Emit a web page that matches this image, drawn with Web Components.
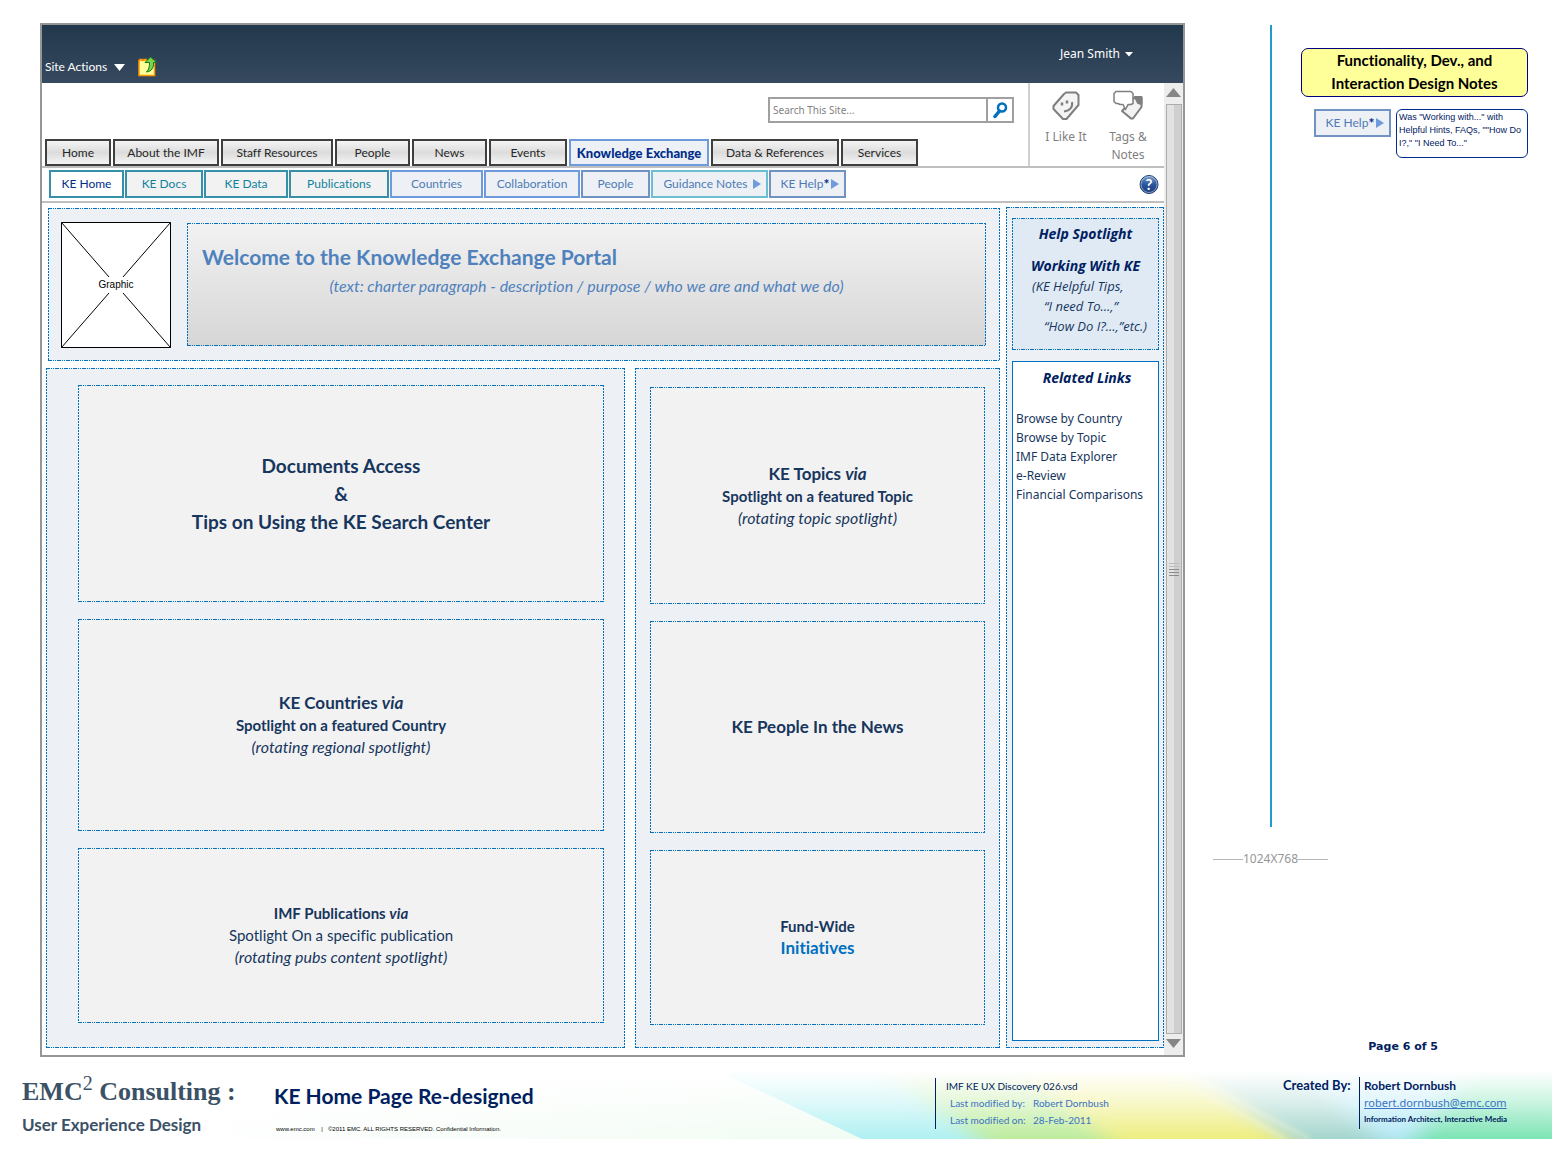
<!DOCTYPE html>
<html lang="en">
<head>
<meta charset="utf-8">
<title>KE Home Page Re-designed</title>
<style>
  body {
    margin: 0;
    min-height: 100vh;
    display: flex;
    flex-direction: column;
    background: #fff;
    color: #17365d;
    font: 16px/20px Lato, "Open Sans", sans-serif;
    font-variant-ligatures: none;
    --blue: #0070c0;
    --navy: #002060;
    --panel: #edf1f6;
  }
  .sheet {
    flex: 1;
    display: grid;
    grid-template-columns: minmax(0, 1fr) 374px;
    padding: 23px 0 0 40px;
  }
  ke-window { min-width: 0; }
  p { margin: 0; }
  .lead { font-size: 19px; line-height: 28px; }
  .head { font-size: 17px; line-height: 22px; }
  .sub { font-size: 15px; line-height: 22px; }
  .note { font-size: 16px; line-height: 22px; }
  .blue { color: var(--blue); }
</style>
</head>
<body>
<div class="sheet">
  <ke-window>
    <ke-topbar slot="top"></ke-topbar>
    <ke-header slot="head">
      <ke-search slot="search"></ke-search>
      <ke-tab slot="tabs" width="66">Home</ke-tab>
      <ke-tab slot="tabs" width="106">About the IMF</ke-tab>
      <ke-tab slot="tabs" width="112">Staff Resources</ke-tab>
      <ke-tab slot="tabs" width="75">People</ke-tab>
      <ke-tab slot="tabs" width="75">News</ke-tab>
      <ke-tab slot="tabs" width="78">Events</ke-tab>
      <ke-tab slot="tabs" width="140" kind="active">Knowledge Exchange</ke-tab>
      <ke-tab slot="tabs" width="128">Data &amp; References</ke-tab>
      <ke-tab slot="tabs" width="77">Services</ke-tab>
    </ke-header>
    <ke-subnav slot="head">
      <ke-tab width="75" kind="current">KE Home</ke-tab>
      <ke-tab width="78" kind="teal">KE Docs</ke-tab>
      <ke-tab width="84" kind="teal">KE Data</ke-tab>
      <ke-tab width="100" kind="teal">Publications</ke-tab>
      <ke-tab width="93" kind="sky">Countries</ke-tab>
      <ke-tab width="96" kind="sky">Collaboration</ke-tab>
      <ke-tab width="69" kind="steel">People</ke-tab>
      <ke-tab width="117" kind="aqua" arrow>Guidance Notes</ke-tab>
      <ke-tab width="77" kind="steel" arrow starred>KE Help</ke-tab>
    </ke-subnav>

    <ke-hero>
      <span slot="title">Welcome to the Knowledge Exchange Portal</span>
      <span slot="text">(text: charter paragraph - description / purpose / who we are and what we do)</span>
    </ke-hero>

    <ke-columns>
      <ke-panel slot="wide" kind="wide">
        <ke-card>
          <p class="lead"><b>Documents Access</b></p>
          <p class="lead"><b>&amp;</b></p>
          <p class="lead"><b>Tips on Using the KE Search Center</b></p>
        </ke-card>
        <ke-card>
          <p class="head"><b>KE Countries <i>via</i></b></p>
          <p class="sub"><b>Spotlight on a featured Country</b></p>
          <p class="note"><i>(rotating regional spotlight)</i></p>
        </ke-card>
        <ke-card>
          <p class="sub"><b>IMF Publications <i>via</i></b></p>
          <p class="sub">Spotlight On a specific publication</p>
          <p class="note"><i>(rotating pubs content spotlight)</i></p>
        </ke-card>
      </ke-panel>
      <ke-panel slot="slim" kind="slim">
        <ke-card>
          <p class="head"><b>KE Topics <i>via</i></b></p>
          <p class="sub"><b>Spotlight on a featured Topic</b></p>
          <p class="note"><i>(rotating topic spotlight)</i></p>
        </ke-card>
        <ke-card>
          <p class="head"><b>KE People In the News</b></p>
        </ke-card>
        <ke-card>
          <p class="sub"><b>Fund-Wide</b></p>
          <p class="head blue"><b>Initiatives</b></p>
        </ke-card>
      </ke-panel>
    </ke-columns>

    <ke-sidebar slot="side"></ke-sidebar>
  </ke-window>
  <ke-notes></ke-notes>
</div>
<ke-footer></ke-footer>

<script>
// dash-dot-dot outline drawn along the four edges of a box
const outline = `
  background-image:
    repeating-linear-gradient(90deg, var(--blue) 0 4px, transparent 4px 5px, var(--blue) 5px 6px, transparent 6px 7px, var(--blue) 7px 8px, transparent 8px 9px),
    repeating-linear-gradient(90deg, var(--blue) 0 4px, transparent 4px 5px, var(--blue) 5px 6px, transparent 6px 7px, var(--blue) 7px 8px, transparent 8px 9px),
    repeating-linear-gradient(180deg, var(--blue) 0 2px, transparent 2px 3px),
    repeating-linear-gradient(180deg, var(--blue) 0 2px, transparent 2px 3px),
    linear-gradient(var(--from, transparent), var(--to, transparent));
  background-size: 100% 1px, 100% 1px, 1px 100%, 1px 100%, 100% 100%;
  background-position: top, bottom, left, right, center;
  background-repeat: no-repeat;
`;

const reset = `
  *, *::before, *::after { box-sizing: border-box; }
  button { margin: 0; padding: 0; border: 0; background: none; font: inherit; color: inherit; }
  a { color: inherit; text-decoration: none; }
`;

function define(name, markup) {
  customElements.define(name, class extends HTMLElement {
    connectedCallback() {
      if (this.shadowRoot) return;
      const root = this.attachShadow({ mode: "open" });
      root.innerHTML = typeof markup === "function" ? markup(this) : markup;
    }
  });
}

define("ke-window", `
  <style>${reset}
    :host { display: flex; flex-direction: column; box-sizing: border-box; border: 2px solid #969696; }
    .view { flex: 1; display: grid; grid-template-columns: minmax(0, 1fr) 19px; }
    .page { display: flex; flex-direction: column; }
    .body { flex: 1; display: grid; grid-template-columns: minmax(0, 1fr) 158px; gap: 6px; padding: 5px 0 7px 4px; }
    .main { display: flex; flex-direction: column; gap: 7px; }
  </style>
  <slot name="top"></slot>
  <div class="view">
    <div class="page">
      <slot name="head"></slot>
      <div class="body">
        <div class="main"><slot></slot></div>
        <slot name="side"></slot>
      </div>
    </div>
    <ke-scrollbar></ke-scrollbar>
  </div>
`);

define("ke-topbar", `
  <style>${reset}
    :host { display: flex; justify-content: space-between; height: 58px; color: #fff;
      background: linear-gradient(#22384c, #36495f); font-size: 12px; line-height: 18px; }
    .left { display: flex; align-items: center; gap: 13px; padding: 26px 0 0 3px; }
    button { display: flex; align-items: center; gap: 7px; }
    .right { padding: 20px 50px 0 0; align-self: flex-start; font: 12px/18px "Noto Sans", sans-serif; }
    .right button { gap: 5px; }
  </style>
  <div class="left">
    <button>Site Actions <svg width="11" height="7"><path d="M0 0h11L5.500 7z" fill="#fff"/></svg></button>
    <svg width="20" height="22" viewBox="0 0 20 22">
      <path d="M1 4.500h1v-1h2v1h2v-1h2v1h8.500v15H1z" fill="#ffff99" stroke="#ff9900" stroke-width="1.500"/>
      <path d="M12.500 1 18.500 6.500h-3c.5 5-2 9-7 9.500 2.500-2.500 3-5 3-9.500H7z" fill="#7fd04f" stroke="#0a7d14"/>
    </svg>
  </div>
  <div class="right"><button>Jean Smith <svg width="8" height="6"><path d="M0 1h8L4 5.500z" fill="#fff"/></svg></button></div>
`);

define("ke-header", `
  <style>${reset}
    :host { display: grid; grid-template-columns: minmax(0, 1fr) 136px; border-bottom: 2px solid #bfbfbf; --tab-height: 27px; }
    .left { display: flex; flex-direction: column; padding: 14px 14px 0 3px; }
    .tabs { display: flex; gap: 2px; margin-top: 16px; }
    .tools { display: flex; gap: 14px; padding: 7px 12px 0 12px; border-left: 2px solid #d0d0d0; color: #7f7f7f; }
    button { display: flex; flex-direction: column; align-items: center; gap: 7px; width: 48px; font: 12px/18px "Noto Sans", sans-serif; }
  </style>
  <div class="left">
    <slot name="search"></slot>
    <div class="tabs"><slot name="tabs"></slot></div>
  </div>
  <div class="tools">
    <button>
      <svg width="30" height="31" viewBox="0 0 30 31" stroke="#7f7f7f" stroke-width="2" stroke-linejoin="round">
        <path d="M2.500 16 13 4 15 2.500h10L27.500 5v10L15.500 29H12L2.500 19z" fill="#f4f4f4"/>
        <path d="M21 12c1 5-2 9-8 9.500" fill="none"/>
        <path d="M11 12.500v3M16 10.500v3" stroke-width="2.500"/>
      </svg>
      I Like It
    </button>
    <button>
      <svg width="30" height="31" viewBox="0 0 30 31" stroke="#7f7f7f" stroke-width="2" stroke-linejoin="round">
        <path d="M9 21 21 8h7.500v9L20 28.500h-2z" fill="#f2f2f2"/>
        <path d="M22 7h6.500v7l-3.500-1z" fill="#7f7f7f"/>
        <path d="M3 1.500h15l2 2v10l-2 1h-3l-2.500 5-2.500-5H7l-2-1H3l-2-2v-8z" fill="#fff" stroke-width="1.500"/>
      </svg>
      Tags &amp; Notes
    </button>
  </div>
`);

define("ke-search", `
  <style>${reset}
    :host { display: flex; align-self: flex-end; width: 246px; height: 26px; border: 2px solid #a0a0a0; box-sizing: border-box; }
    input { flex: 1; min-width: 0; padding: 0 3px; border: 0; outline: 0; font: 10px/18px "Noto Sans", sans-serif; color: #7f7f7f; }
    input::placeholder { color: #7f7f7f; opacity: 1; }
    button { width: 26px; display: grid; place-items: center; border-left: 2px solid #a0a0a0; }
  </style>
  <input type="search" placeholder="Search This Site..." aria-label="Search This Site">
  <button aria-label="Search">
    <svg width="15" height="17" viewBox="0 0 15 17" fill="none" stroke="#0070c0"><circle cx="9" cy="5.500" r="4" stroke-width="2.500"/><path d="M6.500 9 2 14.500" stroke-width="3.500" stroke-linecap="round"/></svg>
  </button>
`);

define("ke-tab", host => `
  <style>${reset}
    :host { display: block; width: ${host.getAttribute("width")}px; font-size: 12px; line-height: 20px;
      --line: #3f3f3f; --ink: #262626; --fill: linear-gradient(#f4f4f4, #dcdcdc 50%, #f4f4f4); }
    :host([kind]) { --fill: var(--panel); }
    :host([kind="active"]) { --line: #6f9bdc; --ink: #002d8a; font-size: 13px; font-weight: 900; }
    :host([kind="current"]) { --line: #3590a8; --ink: #002d8a; --fill: #fff; }
    :host([kind="teal"]) { --line: #3590a8; --ink: #0f829f; --fill: #f2f2f2; }
    :host([kind="sky"]) { --line: #6f9bdc; --ink: #4f7ab5; }
    :host([kind="steel"]) { --line: #7193c4; --ink: #4f7ab5; }
    :host([kind="aqua"]) { --line: #6cbfcf; --ink: #4f7ab5; }
    a { display: flex; align-items: center; justify-content: center; height: var(--tab-height, 28px); white-space: nowrap;
      border: 2px solid var(--line); background: var(--fill); color: var(--ink); }
    svg { margin-left: 5px; }
    b { color: #002d8a; font-size: 14px; }
    b + svg { margin-left: 2px; }
    :host([arrow]) a { padding-left: 5px; }
  </style>
  <a href="#"><slot></slot>${host.hasAttribute("starred") ? "<b>*</b>" : ""}${host.hasAttribute("arrow")
    ? `<svg width="8" height="10"><path d="M0 0 8 5 0 10z" fill="#6f9bdc"/></svg>` : ""}</a>
`);

define("ke-subnav", `
  <style>${reset}
    :host { display: flex; justify-content: space-between; align-items: flex-start; padding: 2px 5px 3px 7px; border-bottom: 2px solid #bfbfbf; }
    nav { display: flex; gap: 1px; }
    button { margin-top: 4px; display: flex; }
    svg { font: bold 15px Lato, sans-serif; }
  </style>
  <nav><slot></slot></nav>
  <button aria-label="Help">
    <svg width="20" height="21" viewBox="0 0 20 21">
      <defs><linearGradient id="g" x2="0" y2="1"><stop stop-color="#7fa3d4"/><stop offset=".5" stop-color="#2a569c"/><stop offset="1" stop-color="#173a77"/></linearGradient></defs>
      <circle cx="10" cy="10.500" r="9" fill="url(#g)" stroke="#1d3c70"/>
      <circle cx="10" cy="10.500" r="8" fill="none" stroke="#b4c6e0" stroke-width=".7"/>
      <text x="10" y="16" text-anchor="middle" fill="#fff">?</text>
    </svg>
  </button>
`);

define("ke-hero", `
  <style>${reset}
    :host { display: grid; grid-template-columns: 110px minmax(0, 1fr); gap: 16px; box-sizing: border-box;
      height: 153px; margin-left: 2px; padding: 14px 14px 13px 13px; --from: var(--panel); --to: var(--panel); ${outline} }
    .graphic { display: block; width: 110px; height: 126px; }
    .graphic text { font: 10px "Liberation Sans", sans-serif; }
    .banner { padding: 18px 15px; margin: 1px 0 2px; color: #4f81bd; --from: #f2f2f2; --to: #d6d6d6; ${outline} }
    h1 { margin: 0; font-size: 21px; line-height: 32px; }
    p { margin: 0; font-size: 16px; line-height: 26px; font-style: italic; text-align: center; }
  </style>
  <svg class="graphic" viewBox="0 0 110 126">
    <path d="M.5.5h109v125H.5z" fill="#fff" stroke="#000"/>
    <path d="M.5.500 48 55M109.500.500 62 55M.5 125.500 48 71M109.500 125.500 62 71" stroke="#000"/>
    <text x="55" y="66" text-anchor="middle">Graphic</text>
  </svg>
  <div class="banner">
    <h1><slot name="title"></slot></h1>
    <p><slot name="text"></slot></p>
  </div>
`);

define("ke-columns", `
  <style>
    :host { flex: 1; display: grid; grid-template-columns: minmax(0, 579fr) minmax(0, 365fr); gap: 10px; }
  </style>
  <slot name="wide"></slot>
  <slot name="slim"></slot>
`);

define("ke-panel", `
  <style>
    :host { display: grid; box-sizing: border-box; grid-template-rows: 218fr 212fr 176fr; row-gap: 17px;
      --from: var(--panel); --to: var(--panel); ${outline} }
    :host([kind="wide"]) { padding: 17px 21px 25px 32px; }
    :host([kind="slim"]) { padding: 19px 15px 23px 15px; }
  </style>
  <slot></slot>
`);

define("ke-card", `
  <style>
    :host { display: flex; flex-direction: column; align-items: center; justify-content: center; text-align: center;
      --from: #f2f2f2; --to: #f2f2f2; ${outline} }
  </style>
  <slot></slot>
`);

define("ke-sidebar", `
  <style>${reset}
    :host { display: flex; flex-direction: column; gap: 11px; box-sizing: border-box; margin-top: -1px; padding: 11px 5px 7px 6px;
      --from: var(--panel); --to: var(--panel); ${outline} }
    h2 { margin: 0; font: italic bold 14px/20px "Open Sans", sans-serif; text-align: center; color: var(--navy); }
    .help { height: 132px; padding: 6px 0 0; --from: #dfeaf5; --to: #dfeaf5; ${outline} }
    .help h2 + h2 { margin-top: 12px; }
    .help p { margin: 0; padding-left: 20px; font: italic 13px/20px "Open Sans", sans-serif; white-space: nowrap; }
    .help p + p { padding-left: 32px; }
    .links { flex: 1; padding: 6px 0 0 3px; border: 1px solid var(--blue); background: #fff; }
    ul { list-style: none; margin: 21px 0 0; padding: 0; font: 12px/19px "Noto Sans", sans-serif; }
  </style>
  <section class="help">
    <h2>Help Spotlight</h2>
    <h2>Working With KE</h2>
    <p>(KE Helpful Tips,</p>
    <p>“I need To...,”</p>
    <p>“How Do I?...,”etc.)</p>
  </section>
  <section class="links">
    <h2>Related Links</h2>
    <ul>
      <li><a href="#">Browse by Country</a></li>
      <li><a href="#">Browse by Topic</a></li>
      <li><a href="#">IMF Data Explorer</a></li>
      <li><a href="#">e-Review</a></li>
      <li><a href="#">Financial Comparisons</a></li>
    </ul>
  </section>
`);

define("ke-scrollbar", `
  <style>${reset}
    :host { display: flex; flex-direction: column; align-items: center; background: #ededed; }
    svg { flex: none; margin: 5px 0 7px; }
    .thumb { flex: 1; width: 16px; border: 1px solid #adadad; background: linear-gradient(90deg, #e3e3e3 50%, #cfcfcf 50%);
      display: flex; flex-direction: column; align-items: center; justify-content: center; gap: 2px; }
    .thumb i { width: 10px; height: 1px; background: #8c8c8c; }
    .thumb i:nth-child(-n+2) { background: #bdbdbd; }
  </style>
  <svg width="15" height="9"><path d="M7.500 0 15 9H0z" fill="#868686"/></svg>
  <div class="thumb"><i></i><i></i><i></i><i></i><i></i></div>
  <svg width="15" height="9"><path d="M0 0h15L7.500 9z" fill="#868686"/></svg>
`);

define("ke-notes", `
  <style>${reset}
    :host { display: flex; flex-direction: column; padding: 2px 31px 1px 28px; }
    .top { flex: 1; display: grid; grid-template-columns: 2px minmax(0, 1fr); gap: 29px; padding-left: 57px; }
    .rule { background: #1f9bcf; }
    .list { padding-top: 23px; }
    h2 { margin: 0 0 12px; height: 49px; border: 1px solid #000080; border-radius: 7px; background: #ffff99; color: #000;
      font-size: 15px; line-height: 23px; text-align: center; }
    .note { display: flex; align-items: flex-start; gap: 5px; padding-left: 13px; }
    .note p { flex: 1; margin: 0; height: 49px; padding: 1px 2px; border: 1px solid #002d8a; border-radius: 6px; color: #002060;
      font: 9px/13px "Liberation Sans", sans-serif; }
    .size { display: flex; align-items: center; width: 115px; margin: 23px 0 170px; font: 12px/18px "Noto Sans", sans-serif; color: #969696; }
    .size::before, .size::after { content: ""; flex: 1; height: 1px; background: #b5b5b5; }
    .page { margin: 0 90px 0 0; text-align: right; font: bold 11px/18px "DejaVu Sans", sans-serif; color: var(--navy); }
  </style>
  <div class="top">
    <div class="rule"></div>
    <div class="list">
      <h2>Functionality, Dev., and<br>Interaction Design Notes</h2>
      <div class="note">
        <ke-tab width="77" kind="steel" arrow starred>KE Help</ke-tab>
        <p>Was "Working with..." with Helpful Hints, FAQs, ""How Do I?," "I Need To..."</p>
      </div>
    </div>
  </div>
  <div class="size">1024X768</div>
  <p class="page">Page 6 of 5</p>
`);

define("ke-footer", `
  <style>${reset}
    :host { display: grid; height: 82px; margin: 0 7px 14px 0; color: var(--navy); }
    :host > * { grid-area: 1 / 1; }
    .wash { grid-area: 1 / 1; width: 100%; height: 74px; align-self: end; display: block; }
    .bar { grid-area: 1 / 1; display: grid; grid-template-columns: 252px minmax(0, 1fr) 348px 269px; padding-left: 22px; z-index: 1; }
    p { margin: 0; }
    .brand { padding-top: 18px; color: #3b5166; }
    .name { font: bold 26px/34px "Liberation Serif", serif; }
    sup { font-size: 20px; line-height: 0; font-weight: 400; }
    .unit { margin-top: 2px; font-size: 17px; line-height: 28px; font-weight: bold; }
    .title { padding-top: 24px; }
    .title h2 { margin: 0; font-size: 21px; line-height: 30px; }
    .title p { margin-top: 12px; padding-left: 2px; font: 6px/12px "Liberation Sans", sans-serif; color: #000; white-space: pre; }
    .file { margin: 21px 0 10px; padding-left: 10px; border-left: 1px solid var(--navy); font-size: 10px; line-height: 17px; }
    .file > p { font-size: 10px; }
    dl { margin: 0; padding-left: 4px; display: grid; grid-template-columns: 83px 1fr; color: #3a72c4; line-height: 17px; }
    dd { margin: 0; }
    .author { display: grid; grid-template-columns: 76px 1fr; padding-top: 20px; }
    .author > p { font-size: 13px; line-height: 17px; font-weight: bold; white-space: nowrap; }
    .author div { height: 52px; padding-left: 4px; border-left: 1px solid var(--navy); }
    .author div b { display: block; font-size: 12px; line-height: 17px; }
    .author a { display: block; font: 11px/17px "Noto Sans", sans-serif; color: #3a72c4; text-decoration: underline; }
    .author small { display: block; font: bold 8px/17px Lato, sans-serif; white-space: nowrap; }
  </style>
  <svg class="wash" viewBox="0 0 1552 74" preserveAspectRatio="none" aria-hidden="true">
    <defs>
      <linearGradient id="base"><stop offset=".1" stop-color="#fff"/><stop offset=".5" stop-color="#f2fcf4"/></linearGradient>
      <linearGradient id="fade" x2="0" y2="1"><stop offset=".08" stop-color="#fff"/><stop offset=".5" stop-color="#fff" stop-opacity=".6"/><stop offset="1" stop-color="#fff" stop-opacity="0"/></linearGradient>
      <filter id="soft" x="-20%" y="-50%" width="140%" height="200%"><feGaussianBlur stdDeviation="14 5"/></filter>
      <filter id="thin" x="-20%" y="-50%" width="140%" height="200%"><feGaussianBlur stdDeviation="2"/></filter>
    </defs>
    <path d="M0 0h1552v74H0z" fill="url(#base)"/>
    <path d="M705 0 862 74H1120V0z" fill="#aff0f2"/>
    <g filter="url(#soft)">
      <path d="M870-10 1000 90h560V-10z" fill="#bdec9c"/>
      <path d="M1000-10 1130 90h300V-10z" fill="#eeee80"/>
      <path d="M1170-10 1310 90h260V-10z" fill="#a4d6cd"/>
      <path d="M1280-10 1400 90h160V-10z" fill="#b4e8f8"/>
      <path d="M1400 90 1480-10h100v100z" fill="#7ce4b4"/>
    </g>
    <path d="M1190 20 1285 74M1200 16 1310 74" stroke="#fffde0" stroke-width="2" stroke-opacity=".5" filter="url(#thin)"/>
    <path d="M0 0h1552v74H0z" fill="url(#fade)"/>
  </svg>
  <div class="bar">
    <div class="brand">
      <p class="name">EMC<sup>2</sup> Consulting :</p>
      <p class="unit">User Experience Design</p>
    </div>
    <div class="title">
      <h2>KE Home Page Re-designed</h2>
      <p>www.emc.com    |   ©2011 EMC. ALL RIGHTS RESERVED. Confidential Information.</p>
    </div>
    <div class="file">
      <p>IMF KE UX Discovery 026.vsd</p>
      <dl><dt>Last modified by:</dt><dd>Robert Dornbush</dd><dt>Last modified on:</dt><dd>28-Feb-2011</dd></dl>
    </div>
    <div class="author">
      <p>Created By:</p>
      <div>
        <b>Robert Dornbush</b>
        <a href="#">robert.dornbush@emc.com</a>
        <small>Information Architect, Interactive Media</small>
      </div>
    </div>
  </div>
`);
</script>
</body>
</html>
